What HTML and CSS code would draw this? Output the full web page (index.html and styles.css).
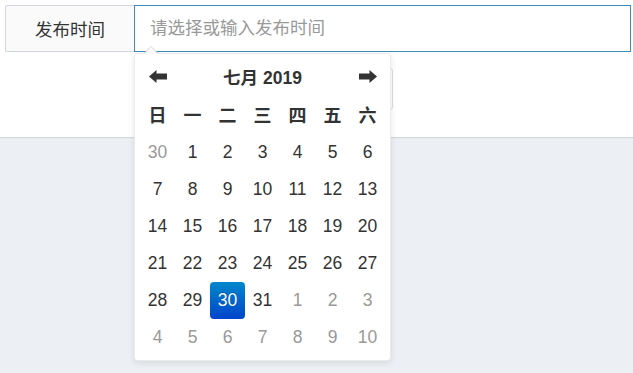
FILE: index.html
```html
<!DOCTYPE html>
<html lang="zh-CN">
  <head>
    <meta charset="UTF-8" />
    <meta name="viewport" content="width=device-width, initial-scale=1.0" />
    <title>发布时间</title>
    <link rel="stylesheet" href="styles.css">
  </head>
  <body>
    <section class="box">
      <div class="form-row">
        <span class="addon">发布时间</span>
        <div class="input-wrap">
          <input type="text" placeholder="请选择或输入发布时间" />
          <div class="picker">
            <table>
              <thead>
                <tr>
                  <th class="prev">
                    <svg width="18" height="13" viewBox="0 0 18 13"><path d="M0 6.5 L7.5 0 V3.6 H18 V9.4 H7.5 V13 Z" fill="#333"/></svg>
                  </th>
                  <th colspan="5" class="switch">七月 2019</th>
                  <th class="next">
                    <svg width="18" height="13" viewBox="0 0 18 13"><path d="M18 6.5 L10.5 0 V3.6 H0 V9.4 H10.5 V13 Z" fill="#333"/></svg>
                  </th>
                </tr>
                <tr class="dow">
                  <th>日</th><th>一</th><th>二</th><th>三</th><th>四</th><th>五</th><th>六</th>
                </tr>
              </thead>
              <tbody>
                <tr>
                  <td class="old">30</td><td>1</td><td>2</td><td>3</td><td>4</td><td>5</td><td>6</td>
                </tr>
                <tr>
                  <td>7</td><td>8</td><td>9</td><td>10</td><td>11</td><td>12</td><td>13</td>
                </tr>
                <tr>
                  <td>14</td><td>15</td><td>16</td><td>17</td><td>18</td><td>19</td><td>20</td>
                </tr>
                <tr>
                  <td>21</td><td>22</td><td>23</td><td>24</td><td>25</td><td>26</td><td>27</td>
                </tr>
                <tr>
                  <td>28</td><td>29</td><td class="active">30</td><td>31</td><td class="new">1</td><td class="new">2</td><td class="new">3</td>
                </tr>
                <tr>
                  <td class="new">4</td><td class="new">5</td><td class="new">6</td><td class="new">7</td><td class="new">8</td><td class="new">9</td><td class="new">10</td>
                </tr>
              </tbody>
            </table>
          </div>
        </div>
      </div>
      <div class="actions">
        <button class="btn">查询</button>
      </div>
    </section>
  </body>
</html>
```

FILE: styles.css
```css
html,
body {
  margin: 0;
  min-height: 100vh;
}
body {
  background-color: #ecf0f5;
  font-family: "Liberation Sans", "Noto Sans CJK SC", sans-serif;
  color: #333;
}
.box {
  height: 137px;
  background-color: white;
  box-shadow: 0 1px 1px rgba(0, 0, 0, 0.1);
  padding: 5px 2px 0 5px;
  box-sizing: border-box;
}
.form-row {
  display: flex;
  height: 47px;
}
.addon {
  width: 129px;
  box-sizing: border-box;
  display: flex;
  align-items: center;
  justify-content: center;
  background-color: #fafafa;
  border: 1px solid #d2d6de;
  border-right: none;
  border-radius: 2px 0 0 2px;
  font-size: 17.5px;
}
.input-wrap {
  flex: 1;
  position: relative;
}
.input-wrap input {
  width: 100%;
  height: 47px;
  box-sizing: border-box;
  border: 1px solid #3c8dbc;
  padding: 0 15px;
  font-family: inherit;
  font-size: 17.5px;
  outline: none;
}
.input-wrap input::placeholder {
  color: #999;
}
.actions {
  display: flex;
  margin-top: 16px;
}
.btn {
  margin-left: 300px;
  width: 88px;
  height: 42px;
  background-color: white;
  border: 1px solid #ddd;
  border-radius: 3px;
  font-size: 16px;
}

/*datepicker*/
.picker {
  position: absolute;
  top: 48px;
  left: 0;
  width: 257px;
  box-sizing: border-box;
  padding: 4px 5px;
  background-color: white;
  border: 1px solid rgba(0, 0, 0, 0.08);
  border-radius: 4px;
  box-shadow: 0 2px 6px rgba(0, 0, 0, 0.1);
  z-index: 10;
}
.picker::before,
.picker::after {
  content: "";
  position: absolute;
  border-left: 7px solid transparent;
  border-right: 7px solid transparent;
}
.picker::before {
  top: -8px;
  left: 9px;
  border-bottom: 7px solid #ddd;
}
.picker::after {
  top: -7px;
  left: 10px;
  border-left-width: 6px;
  border-right-width: 6px;
  border-bottom: 7px solid white;
}
.picker table {
  border-collapse: collapse;
  width: 245px;
}
.picker th,
.picker td {
  width: 35px;
  height: 37px;
  padding: 0;
  text-align: center;
  vertical-align: middle;
  font-size: 17.5px;
}
.picker th {
  font-weight: bold;
}
.picker .dow th {
  height: 38.5px;
  font-size: 18px;
}
.picker th svg {
  display: block;
  margin: 0 auto;
}
.picker .switch {
  width: auto;
}
.picker td.old,
.picker td.new {
  color: #999;
}
.picker td.active {
  color: white;
  background-image: linear-gradient(to bottom, #0088cc, #0044cc);
  border-radius: 4px;
  text-shadow: 0 -1px 0 rgba(0, 0, 0, 0.25);
}
```
